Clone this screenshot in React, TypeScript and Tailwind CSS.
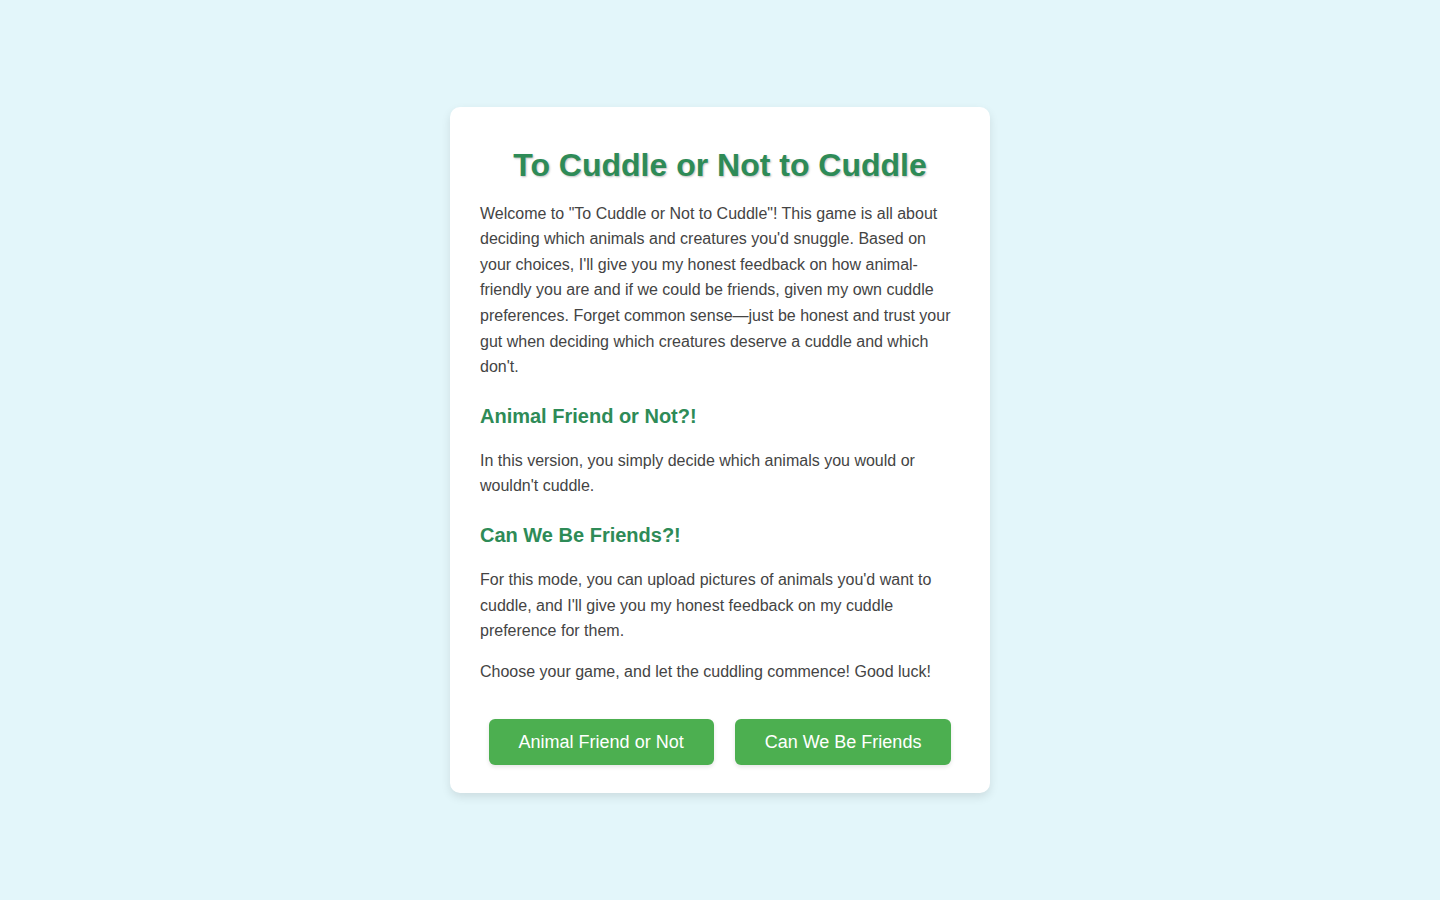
export default function App() {
  return (
    <div className="min-h-screen w-full bg-[#e3f6fa] flex items-center justify-center font-['Liberation_Sans',Arial,sans-serif]">
      <div className="w-[540px] bg-white rounded-[10px] shadow-[0_4px_10px_rgba(0,0,0,0.1)] px-[30px] pt-[40px] pb-[28px]">
        <h1 className="text-[32px] leading-[37px] font-bold text-center text-[#2e8b57] [text-shadow:1px_1px_2px_rgba(0,0,0,0.25)] mb-[17px]">
          To Cuddle or Not to Cuddle
        </h1>
        <p className="text-[16px] leading-[1.6] text-[#444]">
          Welcome to "To Cuddle or Not to Cuddle"! This game is all about deciding which animals and creatures you'd
          snuggle. Based on your choices, I'll give you my honest feedback on how animal-friendly you are and if we
          could be friends, given my own cuddle preferences. Forget common sense—just be honest and trust your gut when
          deciding which creatures deserve a cuddle and which don't.
        </p>

        <h2 className="text-[20px] leading-[32px] font-bold text-[#2e8b57] mt-[20px] mb-[16px]">Animal Friend or Not?!</h2>
        <p className="text-[16px] leading-[1.6] text-[#444]">
          In this version, you simply decide which animals you would or wouldn't cuddle.
        </p>

        <h2 className="text-[20px] leading-[32px] font-bold text-[#2e8b57] mt-[20px] mb-[16px]">Can We Be Friends?!</h2>
        <p className="text-[16px] leading-[1.6] text-[#444] mb-[15px]">
          For this mode, you can upload pictures of animals you'd want to cuddle, and I'll give you my honest feedback on
          my cuddle preference for them.
        </p>
        <p className="text-[16px] leading-[1.6] text-[#444]">
          Choose your game, and let the cuddling commence! Good luck!
        </p>

        <div className="flex justify-center gap-[21px] mt-[35px]">
          <button className="bg-[#4caf50] text-white text-[18px] leading-[22px] px-[30px] py-[12px] rounded-[6px] shadow-[0_2px_4px_rgba(0,0,0,0.1)]">
            Animal Friend or Not
          </button>
          <button className="bg-[#4caf50] text-white text-[18px] leading-[22px] px-[30px] py-[12px] rounded-[6px] shadow-[0_2px_4px_rgba(0,0,0,0.1)]">
            Can We Be Friends
          </button>
        </div>
      </div>
    </div>
  );
}
